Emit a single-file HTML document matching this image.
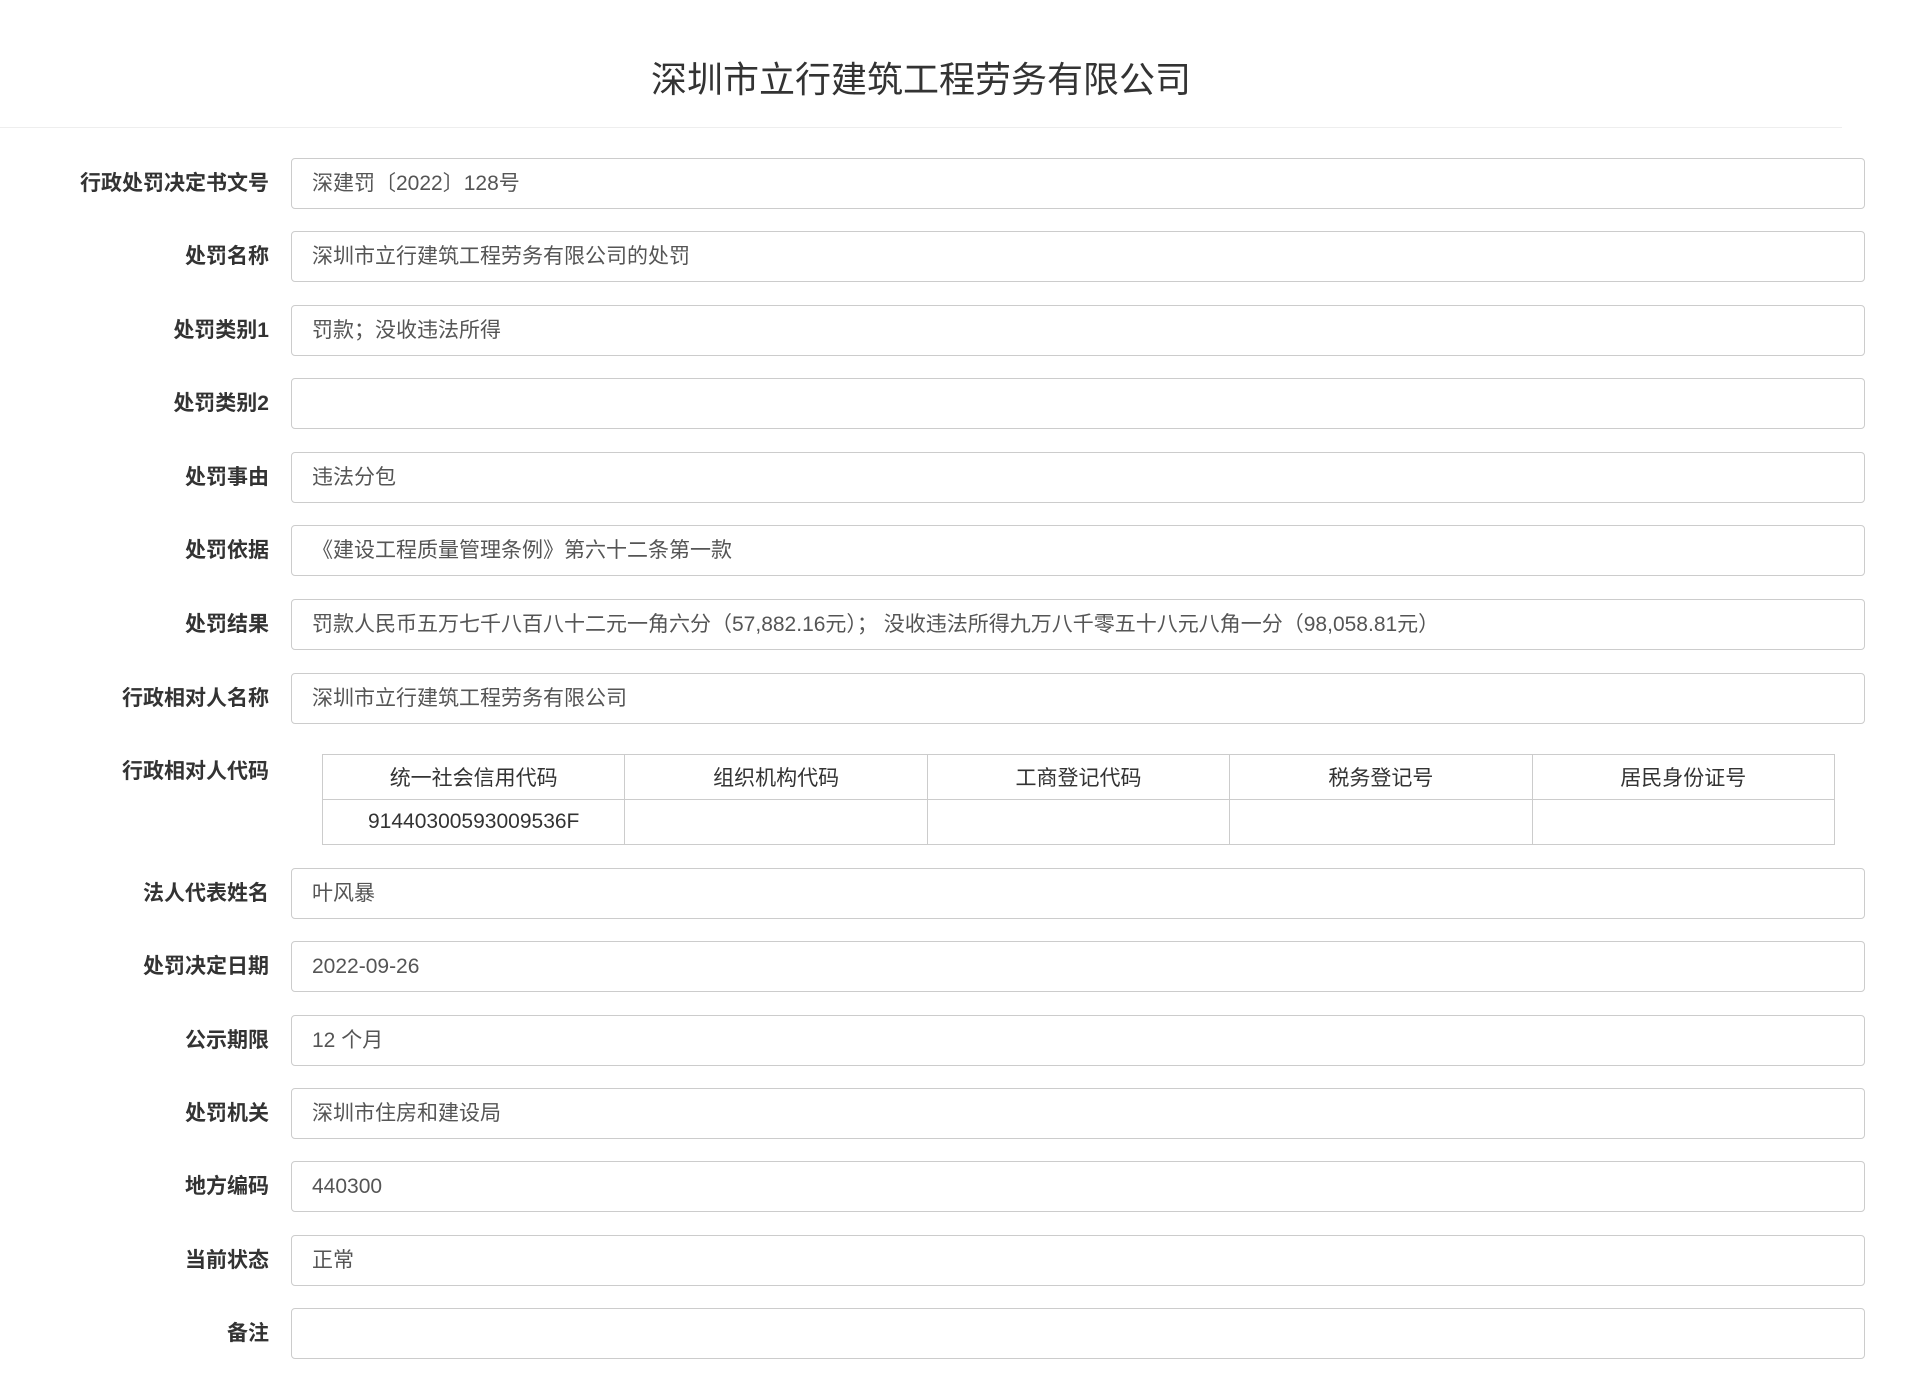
<!DOCTYPE html>
<html><head><meta charset="utf-8"><style>
body{margin:0;width:1920px;height:1383px;background:#fff;font-family:"Liberation Sans","Noto Sans CJK SC",sans-serif;position:relative;overflow:hidden}
.t{position:absolute;left:0;width:1842px;top:55px;text-align:center;font-size:36px;color:#333;line-height:50px}
.hr{position:absolute;left:0;width:1842px;top:127px;border-top:1px solid #eee}
.l{position:absolute;right:1651px;font-size:21px;font-weight:bold;color:#333;line-height:51px;white-space:nowrap}
.b{position:absolute;left:291px;width:1574px;height:51px;border:1px solid #ccc;border-radius:4px;box-sizing:border-box;font-size:21px;color:#555;line-height:49px;padding-left:20px;white-space:nowrap}
table{position:absolute;left:322px;top:754px;width:1513px;border-collapse:collapse;font-size:21px;color:#333;table-layout:fixed}
td{border:1px solid #ccc;height:45px;padding:0;text-align:center;box-sizing:border-box}
</style></head><body>
<div class="t">深圳市立行建筑工程劳务有限公司</div>
<div class="hr"></div>

<div class="l" style="top:158px">行政处罚决定书文号</div><div class="b" style="top:158px">深建罚〔2022〕128号</div>
<div class="l" style="top:231px">处罚名称</div><div class="b" style="top:231px">深圳市立行建筑工程劳务有限公司的处罚</div>
<div class="l" style="top:305px">处罚类别1</div><div class="b" style="top:305px">罚款；没收违法所得</div>
<div class="l" style="top:378px">处罚类别2</div><div class="b" style="top:378px"></div>
<div class="l" style="top:452px">处罚事由</div><div class="b" style="top:452px">违法分包</div>
<div class="l" style="top:525px">处罚依据</div><div class="b" style="top:525px">《建设工程质量管理条例》第六十二条第一款</div>
<div class="l" style="top:599px">处罚结果</div><div class="b" style="top:599px">罚款人民币五万七千八百八十二元一角六分（57,882.16元）； 没收违法所得九万八千零五十八元八角一分（98,058.81元）</div>
<div class="l" style="top:673px">行政相对人名称</div><div class="b" style="top:673px">深圳市立行建筑工程劳务有限公司</div>
<div class="l" style="top:746px">行政相对人代码</div>
<table><tr><td>统一社会信用代码</td><td>组织机构代码</td><td>工商登记代码</td><td>税务登记号</td><td>居民身份证号</td></tr>
<tr><td>91440300593009536F</td><td></td><td></td><td></td><td></td></tr></table>
<div class="l" style="top:868px">法人代表姓名</div><div class="b" style="top:868px">叶风暴</div>
<div class="l" style="top:941px">处罚决定日期</div><div class="b" style="top:941px">2022-09-26</div>
<div class="l" style="top:1015px">公示期限</div><div class="b" style="top:1015px">12 个月</div>
<div class="l" style="top:1088px">处罚机关</div><div class="b" style="top:1088px">深圳市住房和建设局</div>
<div class="l" style="top:1161px">地方编码</div><div class="b" style="top:1161px">440300</div>
<div class="l" style="top:1235px">当前状态</div><div class="b" style="top:1235px">正常</div>
<div class="l" style="top:1308px">备注</div><div class="b" style="top:1308px"></div>
</body></html>
